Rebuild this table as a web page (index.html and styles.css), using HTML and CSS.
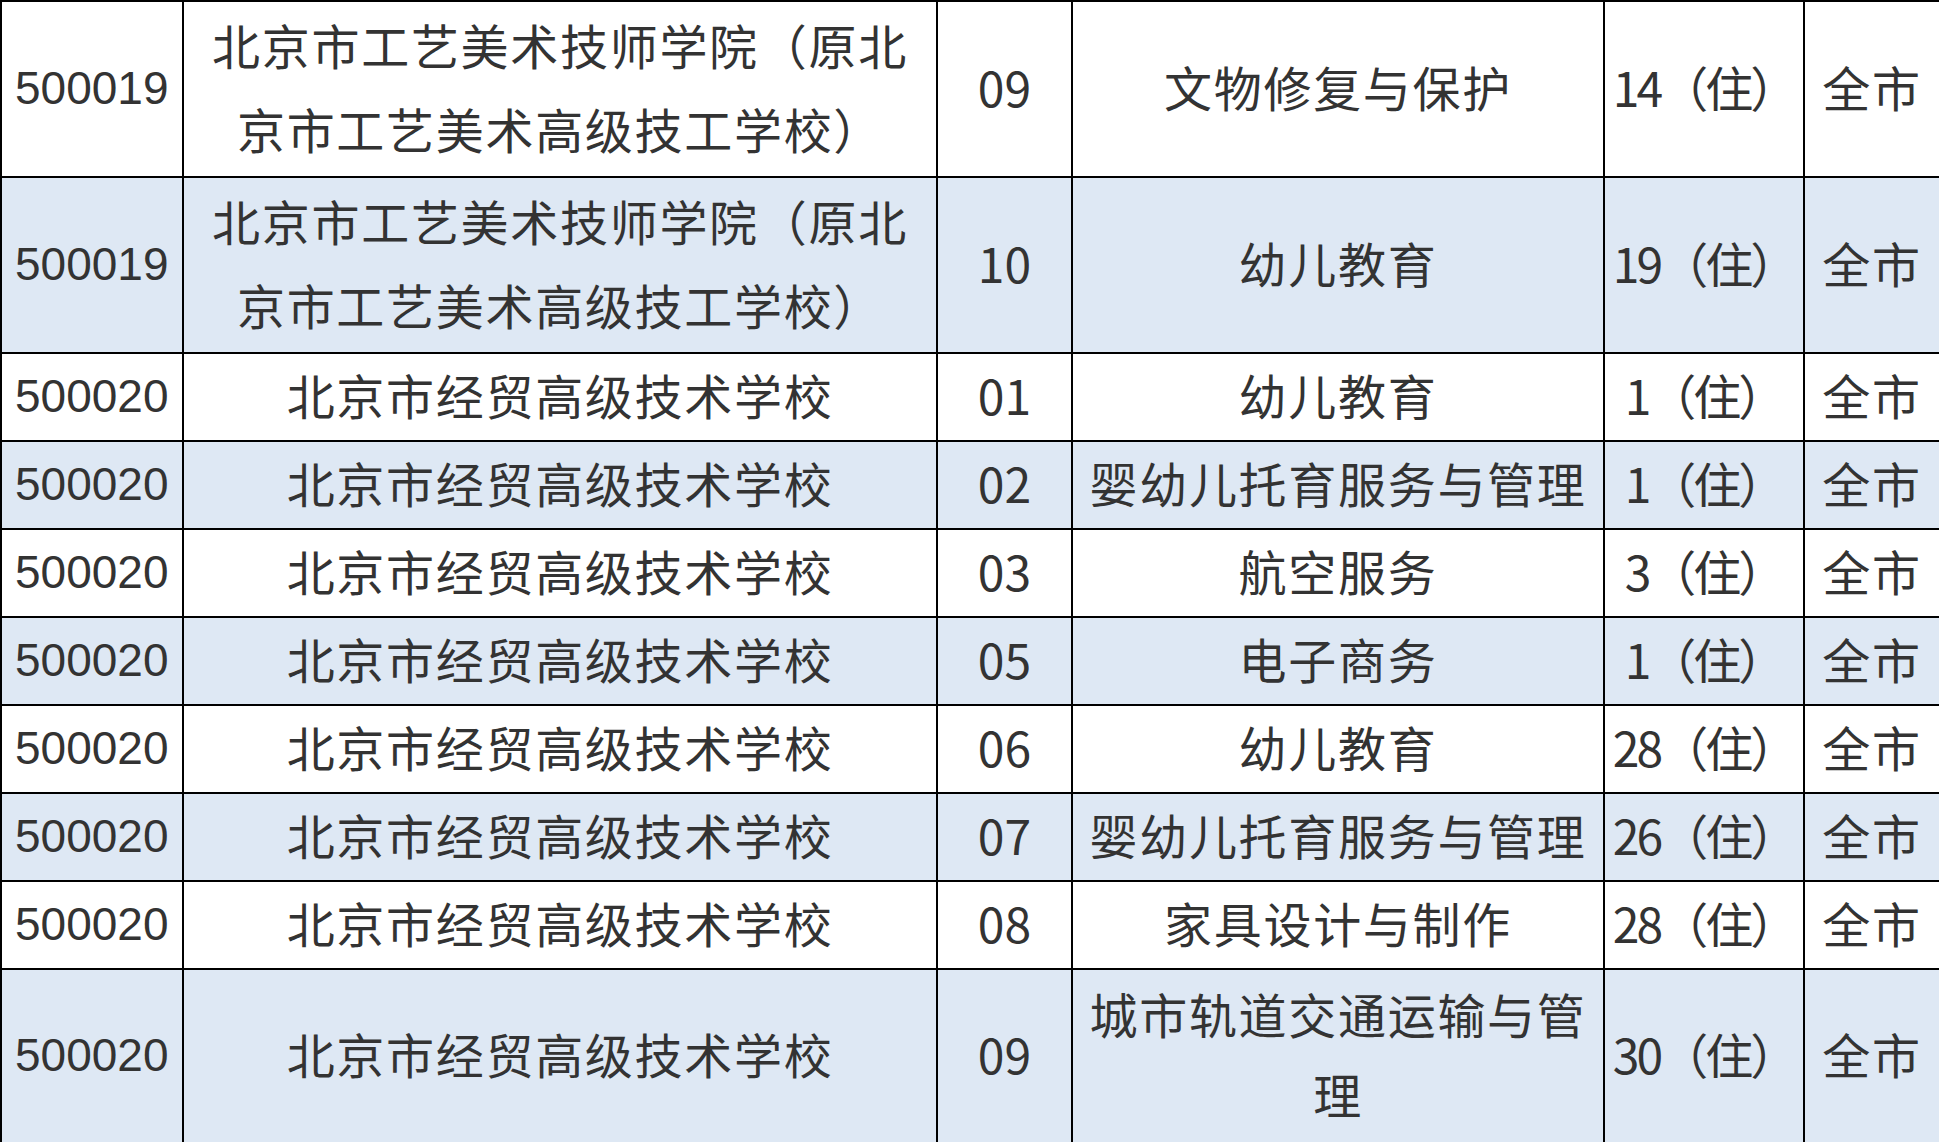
FILE: index.html
```html
<!DOCTYPE html>
<html lang="zh-CN">
<head>
<meta charset="utf-8">
<title>招生计划</title>
<link rel="stylesheet" href="styles.css">
</head>
<body>
<table class="plan">
  <colgroup>
    <col class="c-code"><col class="c-school"><col class="c-no"><col class="c-major"><col class="c-count"><col class="c-area">
  </colgroup>
  <tbody>
    <tr class="tall first">
      <td class="code">500019</td>
      <td class="cjk two">北京市工艺美术技师学院（原北<br>京市工艺美术高级技工学校）</td>
      <td class="num">09</td>
      <td class="cjk">文物修复与保护</td>
      <td class="cnt">14（住）</td>
      <td class="cjk">全市</td>
    </tr>
    <tr class="tall alt">
      <td class="code">500019</td>
      <td class="cjk two">北京市工艺美术技师学院（原北<br>京市工艺美术高级技工学校）</td>
      <td class="num">10</td>
      <td class="cjk">幼儿教育</td>
      <td class="cnt">19（住）</td>
      <td class="cjk">全市</td>
    </tr>
    <tr>
      <td class="code">500020</td>
      <td class="cjk">北京市经贸高级技术学校</td>
      <td class="num">01</td>
      <td class="cjk">幼儿教育</td>
      <td class="cnt">1（住）</td>
      <td class="cjk">全市</td>
    </tr>
    <tr class="alt">
      <td class="code">500020</td>
      <td class="cjk">北京市经贸高级技术学校</td>
      <td class="num">02</td>
      <td class="cjk">婴幼儿托育服务与管理</td>
      <td class="cnt">1（住）</td>
      <td class="cjk">全市</td>
    </tr>
    <tr>
      <td class="code">500020</td>
      <td class="cjk">北京市经贸高级技术学校</td>
      <td class="num">03</td>
      <td class="cjk">航空服务</td>
      <td class="cnt">3（住）</td>
      <td class="cjk">全市</td>
    </tr>
    <tr class="alt">
      <td class="code">500020</td>
      <td class="cjk">北京市经贸高级技术学校</td>
      <td class="num">05</td>
      <td class="cjk">电子商务</td>
      <td class="cnt">1（住）</td>
      <td class="cjk">全市</td>
    </tr>
    <tr>
      <td class="code">500020</td>
      <td class="cjk">北京市经贸高级技术学校</td>
      <td class="num">06</td>
      <td class="cjk">幼儿教育</td>
      <td class="cnt">28（住）</td>
      <td class="cjk">全市</td>
    </tr>
    <tr class="alt">
      <td class="code">500020</td>
      <td class="cjk">北京市经贸高级技术学校</td>
      <td class="num">07</td>
      <td class="cjk">婴幼儿托育服务与管理</td>
      <td class="cnt">26（住）</td>
      <td class="cjk">全市</td>
    </tr>
    <tr>
      <td class="code">500020</td>
      <td class="cjk">北京市经贸高级技术学校</td>
      <td class="num">08</td>
      <td class="cjk">家具设计与制作</td>
      <td class="cnt">28（住）</td>
      <td class="cjk">全市</td>
    </tr>
    <tr class="tall alt">
      <td class="code">500020</td>
      <td class="cjk">北京市经贸高级技术学校</td>
      <td class="num">09</td>
      <td class="cjk wrap">城市轨道交通运输与管<br>理</td>
      <td class="cnt">30（住）</td>
      <td class="cjk">全市</td>
    </tr>
  </tbody>
</table>
</body>
</html>
```

FILE: styles.css
```css
html, body {
  margin: 0;
  padding: 0;
  background: #ffffff;
}

.plan {
  width: 1939px;
  border-collapse: collapse;
  table-layout: fixed;
  color: #333333;
  font-family: "Noto Sans CJK SC", "Noto Sans", sans-serif;
  font-size: 48px;
}

.c-code { width: 182px; }
.c-school { width: 754px; }
.c-no { width: 135px; }
.c-major { width: 532px; }
.c-count { width: 200px; }
.c-area { width: 136px; }

.plan tr { height: 88px; }
.plan tr.tall { height: 174px; }
.plan tr.first { height: 173px; }
.plan tr.alt { background: #dee8f4; }

.plan td {
  border: 2px solid #000000;
  padding: 0 0 6px;
  text-align: center;
  vertical-align: middle;
  line-height: 60px;
  white-space: nowrap;
  overflow: hidden;
}

.plan td.code {
  text-align: left;
  padding: 0 0 2px 13px;
  font-family: "Liberation Sans", Arial, sans-serif;
  font-size: 46px;
}

.plan td.cjk {
  letter-spacing: 1.7px;
}

.plan td.two {
  line-height: 84px;
}

.plan td.wrap {
  line-height: 80px;
}

.plan td.num {
  letter-spacing: 0;
}

.plan td.cnt {
  letter-spacing: -3px;
}
```
